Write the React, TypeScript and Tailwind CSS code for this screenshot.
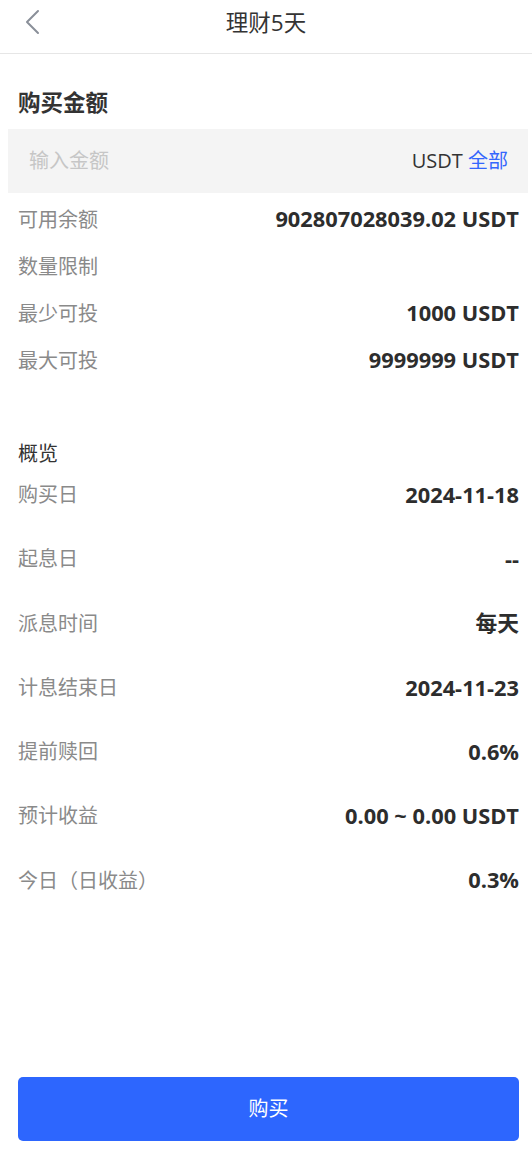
import React from "react";

const font = { fontFamily: '"Open Sans", "Noto Sans CJK SC", sans-serif' };

const limits = [
  { label: "可用余额", value: "902807028039.02 USDT" },
  { label: "数量限制", value: "" },
  { label: "最少可投", value: "1000 USDT" },
  { label: "最大可投", value: "9999999 USDT" },
];

const overview = [
  { label: "购买日", value: "2024-11-18" },
  { label: "起息日", value: "--" },
  { label: "派息时间", value: "每天" },
  { label: "计息结束日", value: "2024-11-23" },
  { label: "提前赎回", value: "0.6%" },
  { label: "预计收益", value: "0.00 ~ 0.00 USDT" },
  { label: "今日（日收益）", value: "0.3%" },
];

const App: React.FC = () => {
  return (
    <div className="min-h-[1170px] bg-white flex flex-col text-[#333]" style={font}>
      {/* header */}
      <div className="h-[54px] border-b border-[#e6e6e6]">
        <div className="relative h-[46px] flex items-center justify-center">
          <svg
            className="absolute left-[22px] top-[9px] w-[22px] h-[26px]"
            viewBox="0 0 22 26"
            fill="none"
            stroke="#8a8f99"
            strokeWidth={2}
            strokeLinecap="round"
            strokeLinejoin="round"
          >
            <polyline points="16,2 5,13 16,24" />
          </svg>
          <h1 className="text-[22.5px] leading-none text-[#333]">理财5天</h1>
        </div>
      </div>

      {/* purchase amount */}
      <div className="pl-[18px] pr-[13px] pt-[35px] pb-[12px]">
        <h2 className="text-[22.5px] leading-[28px] font-bold text-[#333]">购买金额</h2>
      </div>
      <div className="ml-[8px] mr-[4px] h-[64px] bg-[#f4f4f4] flex items-center justify-between pl-[21px] pr-[20px] text-[20px]">
        <span className="text-[#c6c6c6]">输入金额</span>
        <span>
          <span className="text-[#333]">USDT</span> <span className="text-[#3467fd]">全部</span>
        </span>
      </div>

      <div className="pl-[18px] pr-[13px] mt-[3px]">
        {limits.map((r) => (
          <div key={r.label} className="h-[47px] flex items-center justify-between">
            <span className="text-[20px] text-[#8a8a8a]">{r.label}</span>
            <span className="text-[21.8px] font-bold text-[#2d2d2d]">{r.value}</span>
          </div>
        ))}
      </div>

      {/* overview */}
      <div className="pl-[18px] pr-[13px] mt-[56px]">
        <div className="h-[28px] leading-[28px] text-[20px] text-[#333]">概览</div>
        <div className="mt-[13px]">
          {overview.map((r) => (
            <div key={r.label} className="h-[28px] mb-[36.3px] flex items-center justify-between">
              <span className="text-[20px] text-[#8a8a8a]">{r.label}</span>
              <span className="text-[21.8px] font-bold text-[#2d2d2d]">{r.value}</span>
            </div>
          ))}
        </div>
      </div>

      {/* footer button */}
      <div className="mt-auto pl-[18px] pr-[13px] pb-[29px]">
        <button className="w-full h-[64px] rounded-[5px] bg-[#2d66fe] text-white text-[20px]">
          购买
        </button>
      </div>
    </div>
  );
};

export default App;
